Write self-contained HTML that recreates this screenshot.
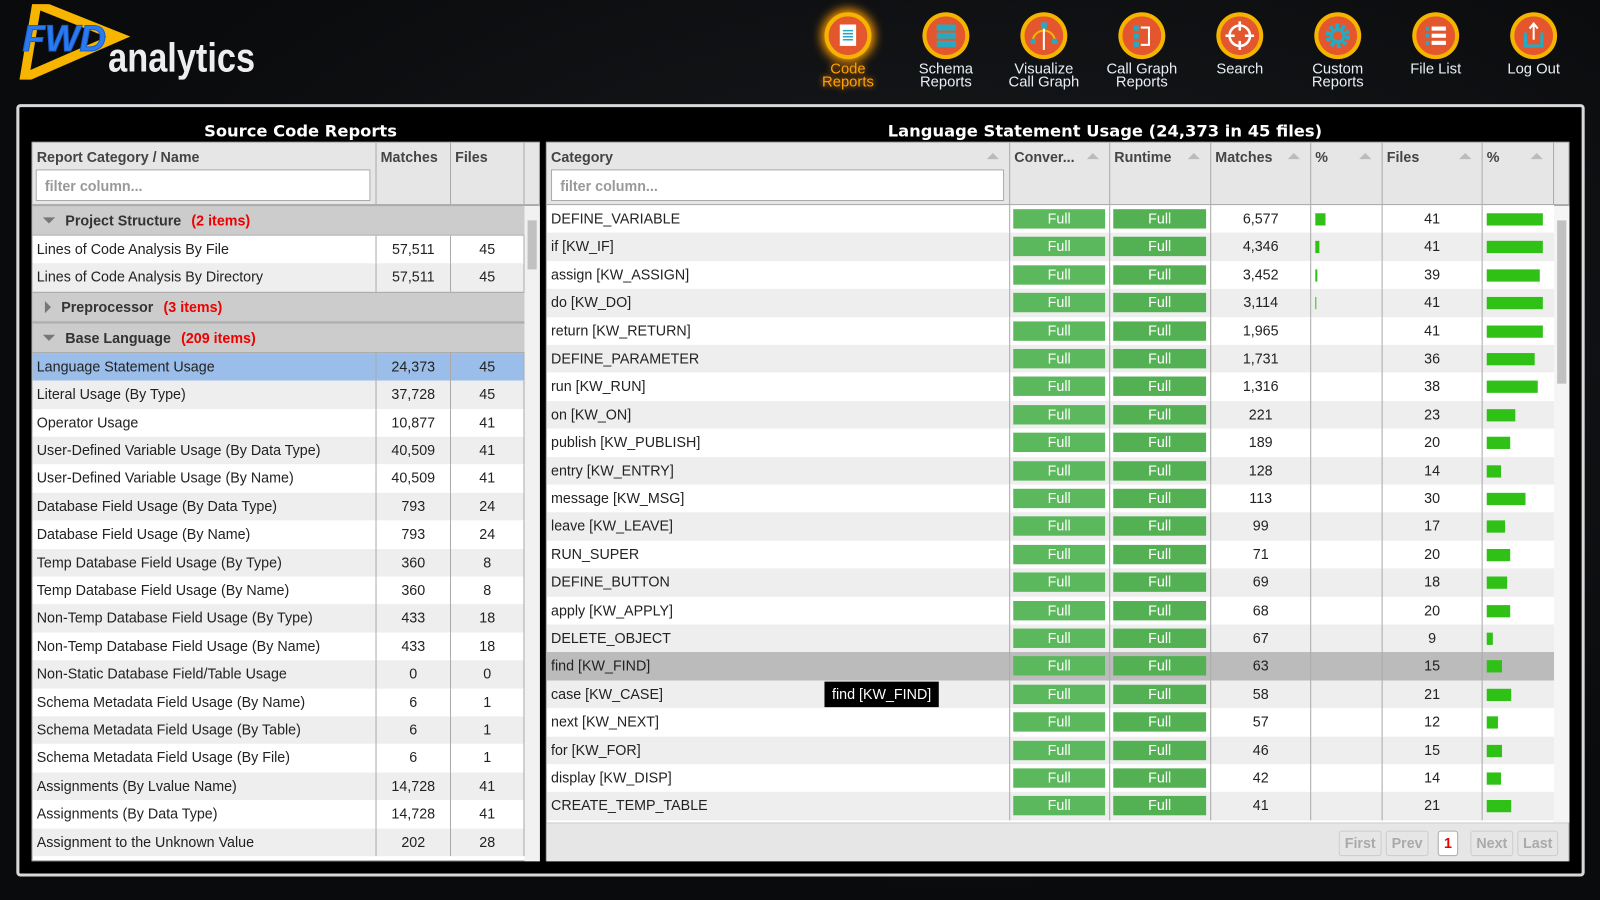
<!DOCTYPE html>
<html><head><meta charset="utf-8"><style>
*{box-sizing:border-box;margin:0;padding:0}
body{width:1600px;height:900px;overflow:hidden;background:#07090b radial-gradient(ellipse at 60% 40%,#1a1c1f 0%,#0a0b0d 70%);font-family:"Liberation Sans",sans-serif;position:relative;color:#222}
#W{position:absolute;left:0;top:0;width:1568px;height:882px;transform:scale(1.0204);transform-origin:0 0}
.logo{position:absolute;left:18px;top:4px}
.nav{position:absolute;top:12px;text-align:center;width:100px;color:#e8eef5;font-size:14.5px;line-height:13px}
.nav .ic{width:46px;height:46px;margin:0 auto 4px;border-radius:50%;background:#f5b400;position:relative}
.nav .ic svg{position:absolute;left:4px;top:4px}
.nav.act{color:#ffa200;text-shadow:0 0 6px #ff8c00}
.nav.act .ic{box-shadow:0 0 10px 3px #ff9c00}
.box{position:absolute;left:16px;top:102px;width:1537px;height:757px;border:3px solid #d9d9d9;border-radius:4px;background:#000}
.ttl{position:absolute;top:119px;color:#fff;font-weight:bold;font-size:16px;font-family:"DejaVu Sans","Liberation Sans",sans-serif}
.tbl{position:absolute;background:#fff;border:1px solid #aaa;font-size:14px}
.hd{position:absolute;top:0;left:0;right:0;height:62px;background:#e6e6e6;border-bottom:2px solid #aaa}
.hc{position:absolute;top:0;height:60px;border-right:1px solid #aaa;font-weight:bold;color:#444;padding:6px 4px;font-size:14px}
.hc .ar{position:absolute;right:10px;top:10px;width:0;height:0;border-left:6px solid transparent;border-right:6px solid transparent;border-bottom:6px solid #bbb}
.flt{position:absolute;left:4px;top:26px;height:31px;border:1px solid #aaa;background:#fff;color:#999;font-size:14px;padding:7px 8px;font-weight:bold}
.r{position:absolute;left:0;height:27.4px;line-height:27.4px;white-space:nowrap}
.c{position:absolute;top:0;height:100%;border-right:1px solid #aaa;padding-left:4px}
.n{text-align:center;padding:0}
.g{background:#ccc;border-top:1px solid #aaa;border-bottom:1px solid #aaa;font-weight:bold;color:#333;font-size:14px}
.g .red{color:#e00;margin-left:10px}
.tri{display:inline-block;width:0;height:0;margin:0 10px 2px 10px;vertical-align:middle}
.td{border-left:6px solid transparent;border-right:6px solid transparent;border-top:6px solid #777}
.tr{border-top:6px solid transparent;border-bottom:6px solid transparent;border-left:6px solid #777;margin-left:12px}
.full{position:absolute;top:4px;height:19px;line-height:19px;background:#5cb85c;color:#fff;text-align:center;font-size:14px}
.bar{position:absolute;top:8px;height:12px;background:#2fc115}
.sb{position:absolute;background:#f1f1f1}
.pg{position:absolute;top:7px;height:25px;border:1px solid #ccc;border-radius:3px;color:#aaa;font-weight:bold;font-size:14px;line-height:23px;text-align:center}
</style></head><body><div id="W">
<div class="logo"><svg width="240" height="74" viewBox="0 0 240 74"><polygon points="18,0 98,32 6,72" fill="none" stroke="#f7b500" stroke-width="9" stroke-linejoin="miter"/><text x="4" y="46" font-family="Liberation Sans" font-style="italic" font-weight="bold" font-size="36" fill="#2b7bf0" stroke="#1a5ed0" stroke-width="1">FWD</text><text x="88" y="66" font-family="Liberation Sans" font-weight="bold" font-size="40" fill="#eee" textLength="144" lengthAdjust="spacingAndGlyphs">analytics</text></svg></div>

<div class="nav act" style="left:781px"><div class="ic"><svg width="38" height="38"><circle cx="19" cy="19" r="19" fill="#e4572e"/><rect x="11" y="8" width="16" height="21" fill="#fff"/><g stroke="#28a9c1" stroke-width="1.5"><line x1="14" y1="14" x2="24" y2="14"/><line x1="14" y1="17" x2="24" y2="17"/><line x1="14" y1="20" x2="24" y2="20"/><line x1="14" y1="23" x2="24" y2="23"/></g></svg></div>Code<br>Reports</div>
<div class="nav" style="left:877px"><div class="ic"><svg width="38" height="38"><circle cx="19" cy="19" r="19" fill="#e4572e"/><rect x="10" y="8" width="19" height="6" fill="#28a9c1"/><rect x="10" y="16" width="19" height="6" fill="#28a9c1"/><rect x="10" y="24" width="19" height="6" fill="#28a9c1"/></svg></div>Schema<br>Reports</div>
<div class="nav" style="left:973px"><div class="ic"><svg width="38" height="38"><circle cx="19" cy="19" r="19" fill="#e4572e"/><path d="M8 25 A11 11 0 0 1 30 25" fill="none" stroke="#f5b400" stroke-width="2"/><line x1="19" y1="12" x2="19" y2="33" stroke="#fff" stroke-width="2"/><rect x="16" y="6" width="6" height="6" fill="#28a9c1"/><rect x="6" y="22" width="5" height="5" fill="#28a9c1"/><rect x="27" y="22" width="5" height="5" fill="#28a9c1"/></svg></div>Visualize<br>Call Graph</div>
<div class="nav" style="left:1069px"><div class="ic"><svg width="38" height="38"><circle cx="19" cy="19" r="19" fill="#e4572e"/><rect x="11" y="9" width="5" height="5" fill="#28a9c1"/><rect x="11" y="17" width="5" height="5" fill="#28a9c1"/><rect x="11" y="25" width="5" height="5" fill="#28a9c1"/><path d="M18 11 H26 V28 H18" fill="none" stroke="#fff" stroke-width="2"/></svg></div>Call Graph<br>Reports</div>
<div class="nav" style="left:1165px"><div class="ic"><svg width="38" height="38"><circle cx="19" cy="19" r="19" fill="#e4572e"/><circle cx="19" cy="19" r="10" fill="none" stroke="#fff" stroke-width="2.5"/><path d="M19 5V14M19 24V33M5 19H14M24 19H33" stroke="#fff" stroke-width="2.5"/></svg></div>Search</div>
<div class="nav" style="left:1261px"><div class="ic"><svg width="38" height="38"><circle cx="19" cy="19" r="19" fill="#e4572e"/><circle cx="19" cy="19" r="9" fill="none" stroke="#28a9c1" stroke-width="6" stroke-dasharray="3.5 2.2"/><circle cx="19" cy="19" r="6" fill="none" stroke="#28a9c1" stroke-width="3"/></svg></div>Custom<br>Reports</div>
<div class="nav" style="left:1357px"><div class="ic"><svg width="38" height="38"><circle cx="19" cy="19" r="19" fill="#e4572e"/><g fill="#28a9c1"><circle cx="11" cy="12" r="2"/><circle cx="11" cy="19" r="2"/><circle cx="11" cy="26" r="2"/></g><g fill="#fff"><rect x="15" y="10" width="14" height="4"/><rect x="15" y="17" width="14" height="4"/><rect x="15" y="24" width="14" height="4"/></g></svg></div>File List</div>
<div class="nav" style="left:1453px"><div class="ic"><svg width="38" height="38"><circle cx="19" cy="19" r="19" fill="#e4572e"/><path d="M11 16V29H27V16" fill="none" stroke="#28a9c1" stroke-width="3"/><line x1="19" y1="8" x2="19" y2="23" stroke="#fff" stroke-width="2"/><path d="M15 12L19 7L23 12" fill="none" stroke="#fff" stroke-width="2"/></svg></div>Log Out</div>

<div class="box"></div>
<div class="ttl" style="left:200px">Source Code Reports</div>
<div class="ttl" style="left:870px">Language Statement Usage (24,373 in 45 files)</div>

<div class="tbl" style="left:31px;top:139px;width:498px;height:705px">
 <div class="hd">
  <div class="hc" style="left:0;width:337px">Report Category / Name<div class="flt" style="width:328px;left:3px">filter column...</div></div>
  <div class="hc" style="left:337px;width:73px">Matches</div>
  <div class="hc" style="left:410px;width:72px">Files</div>
 </div>
 <div class="sb" style="left:482px;top:62px;width:15px;height:642px"><div style="position:absolute;left:3px;top:14px;width:9px;height:48px;background:#c1c1c1"></div></div>
 <div id="L"></div>
</div>

<div class="tbl" style="left:535px;top:139px;width:1003px;height:705px">
 <div class="hd">
  <div class="hc" style="left:0;width:454px">Category<span class="ar"></span><div class="flt" style="width:444px;left:4px">filter column...</div></div>
  <div class="hc" style="left:454px;width:98px">Conver...<span class="ar"></span></div>
  <div class="hc" style="left:552px;width:99px">Runtime<span class="ar"></span></div>
  <div class="hc" style="left:651px;width:98px">Matches<span class="ar"></span></div>
  <div class="hc" style="left:749px;width:70px">%<span class="ar"></span></div>
  <div class="hc" style="left:819px;width:98px">Files<span class="ar"></span></div>
  <div class="hc" style="left:917px;width:70px">%<span class="ar"></span></div>
 </div>
 <div class="sb" style="left:987px;top:62px;width:15px;height:604px;background:#f5f5f5"><div style="position:absolute;left:3px;top:14px;width:9px;height:160px;background:#c1c1c1"></div></div>
 <div id="R"></div>
 <div style="position:absolute;left:0;right:0;top:666px;height:38px;background:#e6e6e6;border-top:1px solid #ccc">
  <div class="pg" style="left:776px;width:42px">First</div>
  <div class="pg" style="left:822px;width:42px">Prev</div>
  <div class="pg" style="left:873px;width:20px;color:#e00;border-color:#aaa;background:#fff">1</div>
  <div class="pg" style="left:905px;width:42px">Next</div>
  <div class="pg" style="left:951px;width:40px">Last</div>
 </div>
 <div style="position:absolute;left:272px;top:528px;width:112px;height:25px;background:#000;color:#fff;font-size:14px;line-height:25px;text-align:center">find [KW_FIND]</div>
</div>
</div>
<script>
var L=document.getElementById('L'),h='';
var y=61;
function g(t,c,open){h+='<div class="r g" style="top:'+y+'px;width:482px;height:30px;line-height:28px"><span class="tri '+(open?'td':'tr')+'"></span>'+t+'<span class="red">('+c+')</span></div>';y+=30;}
function d(t,m,f,bg){h+='<div class="r" style="top:'+y+'px;width:482px;background:'+bg+'"><div class="c" style="left:0;width:337px">'+t+'</div><div class="c n" style="left:337px;width:73px">'+m+'</div><div class="c n" style="left:410px;width:72px">'+f+'</div></div>';y+=27.4;}
g('Project Structure','2 items',1);
d('Lines of Code Analysis By File','57,511','45','#fff');
d('Lines of Code Analysis By Directory','57,511','45','#eee');
g('Preprocessor','3 items',0);
g('Base Language','209 items',1);
var ld=[['Language Statement Usage','24,373','45'],['Literal Usage (By Type)','37,728','45'],['Operator Usage','10,877','41'],['User-Defined Variable Usage (By Data Type)','40,509','41'],['User-Defined Variable Usage (By Name)','40,509','41'],['Database Field Usage (By Data Type)','793','24'],['Database Field Usage (By Name)','793','24'],['Temp Database Field Usage (By Type)','360','8'],['Temp Database Field Usage (By Name)','360','8'],['Non-Temp Database Field Usage (By Type)','433','18'],['Non-Temp Database Field Usage (By Name)','433','18'],['Non-Static Database Field/Table Usage','0','0'],['Schema Metadata Field Usage (By Name)','6','1'],['Schema Metadata Field Usage (By Table)','6','1'],['Schema Metadata Field Usage (By File)','6','1'],['Assignments (By Lvalue Name)','14,728','41'],['Assignments (By Data Type)','14,728','41'],['Assignment to the Unknown Value','202','28']];
ld.forEach(function(r,i){d(r[0],r[1],r[2],i==0?'#9bbde9':(i%2?'#eee':'#fff'));});
L.innerHTML=h;
var R=document.getElementById('R');h='';
var rd=[['DEFINE_VARIABLE',6577,41],['if [KW_IF]',4346,41],['assign [KW_ASSIGN]',3452,39],['do [KW_DO]',3114,41],['return [KW_RETURN]',1965,41],['DEFINE_PARAMETER',1731,36],['run [KW_RUN]',1316,38],['on [KW_ON]',221,23],['publish [KW_PUBLISH]',189,20],['entry [KW_ENTRY]',128,14],['message [KW_MSG]',113,30],['leave [KW_LEAVE]',99,17],['RUN_SUPER',71,20],['DEFINE_BUTTON',69,18],['apply [KW_APPLY]',68,20],['DELETE_OBJECT',67,9],['find [KW_FIND]',63,15],['case [KW_CASE]',58,21],['next [KW_NEXT]',57,12],['for [KW_FOR]',46,15],['display [KW_DISP]',42,14],['CREATE_TEMP_TABLE',41,21]];
rd.forEach(function(r,i){var yy=61+i*27.4;var bg=i==16?'#bbb':(i%2?'#eee':'#fff');
var mw=r[1]>1500?Math.round((r[1]-3000)/3577*9)+1:0;var fw=Math.round((r[2]-5)*1.53);
var ms=r[1].toLocaleString('en-US');
h+='<div class="r" style="top:'+yy+'px;width:987px;background:'+bg+'"><div class="c" style="left:0;width:454px">'+r[0]+'</div>'+
'<div class="c" style="left:454px;width:98px"><div class="full" style="left:3px;width:90px">Full</div></div>'+
'<div class="c" style="left:552px;width:99px"><div class="full" style="left:3px;width:91px;background:#53b153">Full</div></div>'+
'<div class="c n" style="left:651px;width:98px">'+ms+'</div>'+
'<div class="c" style="left:749px;width:70px">'+(mw>0?'<div class="bar" style="left:4px;width:'+mw+'px"></div>':'')+'</div>'+
'<div class="c n" style="left:819px;width:98px">'+r[2]+'</div>'+
'<div class="c" style="left:917px;width:70px;border-right:0"><div class="bar" style="left:4px;width:'+fw+'px"></div></div></div>';});
R.innerHTML=h;
</script>
</body></html>
